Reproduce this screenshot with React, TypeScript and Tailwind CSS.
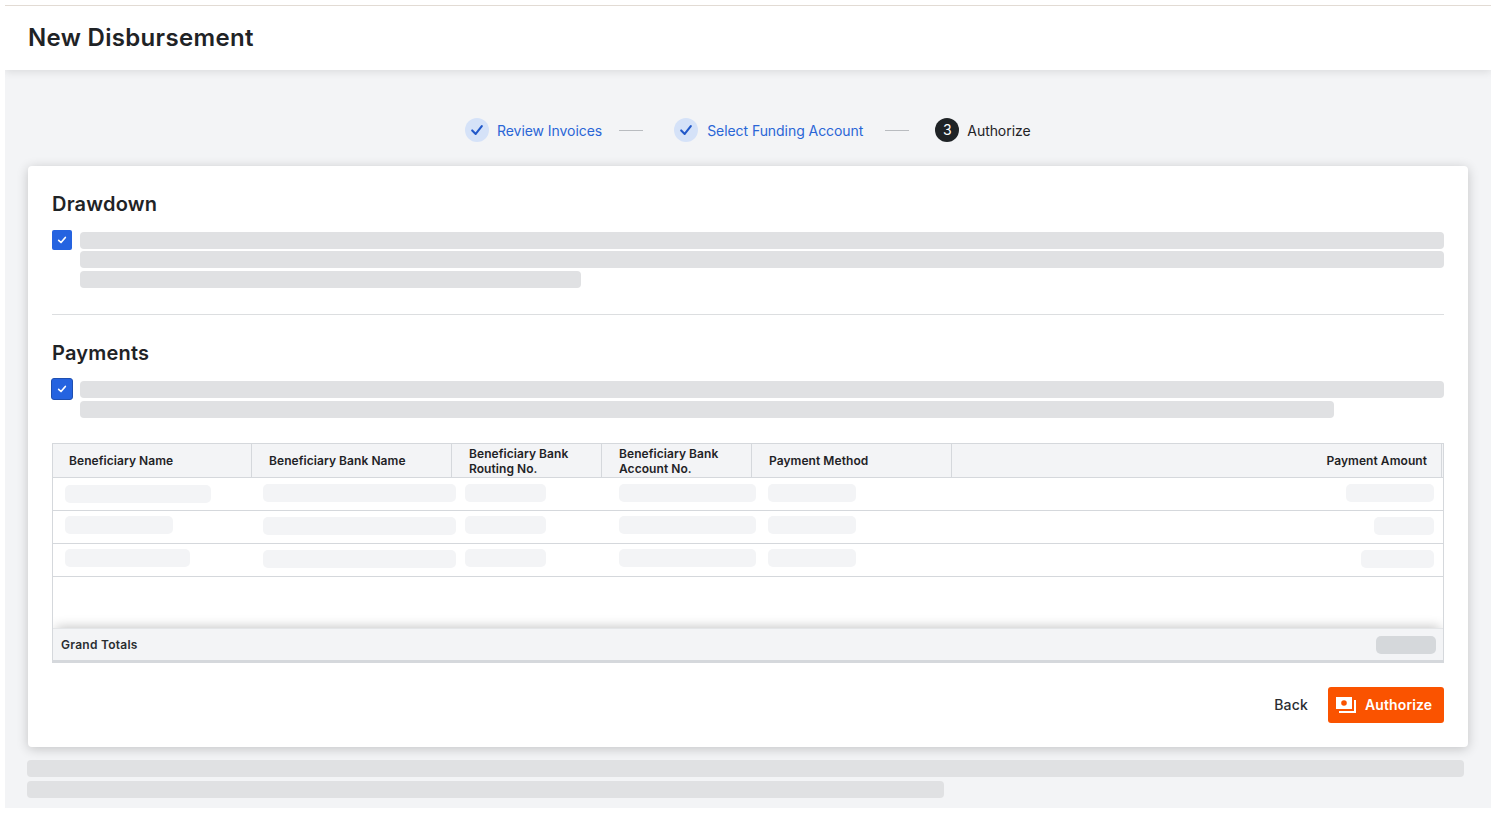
import React from "react";

const grid = "grid grid-cols-[199px_200px_150px_150px_200px_1fr]";

const rows = [
  [
    "ml-3 mt-[7px] w-[146px]",
    "ml-[11px] mt-[6px] w-[193px]",
    "ml-[13px] mt-[6px] w-[81px]",
    "ml-[17px] mt-[6px] w-[137px]",
    "ml-4 mt-[6px] w-[88px]",
    "ml-auto mr-[9px] mt-[6px] w-[88px]",
  ],
  [
    "ml-3 mt-[5px] w-[108px]",
    "ml-[11px] mt-[6px] w-[193px]",
    "ml-[13px] mt-[5px] w-[81px]",
    "ml-[17px] mt-[5px] w-[137px]",
    "ml-4 mt-[5px] w-[88px]",
    "ml-auto mr-[9px] mt-[6px] w-[60px]",
  ],
  [
    "ml-3 mt-[5px] w-[125px]",
    "ml-[11px] mt-[6px] w-[193px]",
    "ml-[13px] mt-[5px] w-[81px]",
    "ml-[17px] mt-[5px] w-[137px]",
    "ml-4 mt-[5px] w-[88px]",
    "ml-auto mr-[9px] mt-[6px] w-[73px]",
  ],
];

function Check({ className }: { className: string }) {
  return (
    <svg viewBox="0 0 16 16" className={className} fill="none" stroke="currentColor" strokeWidth="2.4" strokeLinecap="round" strokeLinejoin="round">
      <path d="M2.5 8.5 6.5 12.5 13.5 3.5" />
    </svg>
  );
}

function Step({ label, gap }: { label: string; gap: string }) {
  return (
    <div className={`flex items-center ${gap}`}>
      <span className="flex h-6 w-6 items-center justify-center rounded-full bg-[#d5e2f8] text-[#2158c9]">
        <Check className="h-[14px] w-[14px]" />
      </span>
      <span className="pt-[2px] text-sm tracking-[-0.06px] text-[#2a66d6]">{label}</span>
    </div>
  );
}

function Box({ ring }: { ring?: boolean }) {
  return (
    <span
      className={
        ring
          ? "flex h-[22px] w-[22px] shrink-0 items-center justify-center rounded-[3px] border border-[#1f4fb0] bg-[#2563e0] text-white"
          : "ml-0 flex h-5 w-5 shrink-0 items-center justify-center rounded-[2px] bg-[#2563e0] text-white"
      }
    >
      <svg viewBox="0 0 12 12" className="h-[10px] w-[10px]" fill="none" stroke="currentColor" strokeWidth="2" strokeLinecap="round" strokeLinejoin="round">
        <path d="M2 6.5 4.8 9 10 3" />
      </svg>
    </span>
  );
}

function Bar({ className }: { className: string }) {
  return <div className={`h-[17px] rounded bg-[#e0e1e3] ${className}`} />;
}

function Head({ children, className }: { children: React.ReactNode; className?: string }) {
  return (
    <div className={`flex items-center border-r border-[#d5d8dc] text-xs font-semibold leading-[15px] tracking-[0.06px] text-[#1f2326] ${className ?? ""}`}>
      <div>{children}</div>
    </div>
  );
}

export default function App() {
  return (
    <div className="h-[814px] w-[1500px] overflow-hidden bg-white pb-[6px] pl-[5px] pr-[9px] pt-[5px] font-['Inter',sans-serif]">
      <div className="flex h-full flex-col overflow-hidden bg-[#f3f4f6]">
        <header className="z-10 flex h-[65px] shrink-0 items-center border-t border-[#e2dbd4] bg-white pl-[23px] shadow-[0_2px_8px_rgba(0,0,0,0.1)]">
          <h1 className="text-2xl font-semibold tracking-[0.32px] text-[#1f2326]">New Disbursement</h1>
        </header>

        <div className="flex h-[96px] shrink-0 items-center pl-[460px] pt-[24px]">
          <Step label="Review Invoices" gap="gap-2" />
          <div className="ml-[17px] mr-[31px] h-px w-6 bg-[#b9bcc0]" />
          <Step label="Select Funding Account" gap="gap-[9px]" />
          <div className="ml-[22px] mr-[26px] h-px w-6 bg-[#b9bcc0]" />
          <div className="flex items-center gap-2">
            <span className="flex h-6 w-6 items-center justify-center rounded-full bg-[#1f2326] text-sm text-white">3</span>
            <span className="pt-[2px] text-sm tracking-[-0.06px] text-[#1f2326]">Authorize</span>
          </div>
        </div>

        <main className="ml-[23px] h-[581px] w-[1440px] shrink-0 rounded bg-white px-6 pt-6 shadow-[0_2px_12px_rgba(0,0,0,0.2)]">
          <h2 className="h-[28px] text-xl font-semibold leading-7 tracking-[0.2px] text-[#1f2326]">Drawdown</h2>
          <div className="mt-3 flex gap-2">
            <Box />
            <div className="flex flex-1 flex-col gap-[2px] pt-[2px]">
              <Bar className="w-full" />
              <Bar className="w-full" />
              <Bar className="mt-[1px] w-[501px]" />
            </div>
          </div>
          <div className="mt-[26px] h-px bg-[#dcdee0]" />
          <h2 className="mt-6 h-[28px] text-xl font-semibold leading-7 tracking-[0.2px] text-[#1f2326]">Payments</h2>
          <div className="-ml-px mt-[11px] flex gap-[7px]">
            <Box ring />
            <div className="flex flex-1 flex-col gap-[3px] pt-[3px]">
              <Bar className="w-full" />
              <Bar className="w-[1254px]" />
            </div>
          </div>

          <div className="mt-[25px] flex h-[220px] flex-col overflow-hidden border border-[#d5d8dc]">
            <div className={`${grid} h-[34px] shrink-0 border-b border-[#d5d8dc] bg-[#f3f4f6]`}>
              <Head className="pl-4">Beneficiary Name</Head>
              <Head className="pl-[17px]">Beneficiary Bank Name</Head>
              <Head className="pl-[17px]">Beneficiary Bank<br />Routing No.</Head>
              <Head className="pl-[17px]">Beneficiary Bank<br />Account No.</Head>
              <Head className="pl-[17px]">Payment Method</Head>
              <Head className="justify-end pr-[14px] mr-px">Payment Amount</Head>
            </div>
            {rows.map((row, i) => (
              <div key={i} className={`${grid} h-[33px] shrink-0 border-b border-[#d5d8dc]`}>
                {row.map((c, j) => (
                  <div key={j} className="flex">
                    <div className={`h-[18px] shrink-0 rounded-[5px] bg-[#f3f4f6] ${c}`} />
                  </div>
                ))}
              </div>
            ))}
            <div className="flex-1" />
            <div className="z-10 flex h-[34px] shrink-0 items-center justify-between border-t border-b-2 border-[#d5d8dc] border-t-[#e4e6e8] bg-[#f3f4f6] pl-2 pr-[7px] shadow-[0_-4px_12px_-3px_rgba(0,0,0,0.24)]">
              <span className="text-xs font-semibold tracking-[0.26px] text-[#2a2d31]">Grand Totals</span>
              <div className="h-[18px] w-[60px] rounded-[5px] bg-[#d5d8db]" />
            </div>
          </div>

          <div className="mt-[24px] flex items-center justify-end">
            <span className="mr-5 text-sm font-medium tracking-[0.2px] text-[#2a2d31]">Back</span>
            <button className="flex h-9 w-[116px] items-center gap-[9px] rounded-[3px] bg-[#fa5300] pl-2 text-sm font-semibold tracking-[0.12px] text-white">
              <svg viewBox="0 0 20 16" className="h-4 w-5" fill="none">
                <path fillRule="evenodd" d="M0 0h16v12H0zM8 3.2a2.8 2.8 0 1 0 0 5.6 2.8 2.8 0 0 0 0-5.6z" fill="#fff" />
                <path d="M3 15h16V3" stroke="#fff" strokeWidth="2" />
              </svg>
              Authorize
            </button>
          </div>
        </main>

        <div className="ml-[22px] mt-[13px] flex w-[1437px] flex-col gap-1">
          <Bar className="w-full" />
          <Bar className="w-[917px]" />
        </div>
      </div>
    </div>
  );
}
